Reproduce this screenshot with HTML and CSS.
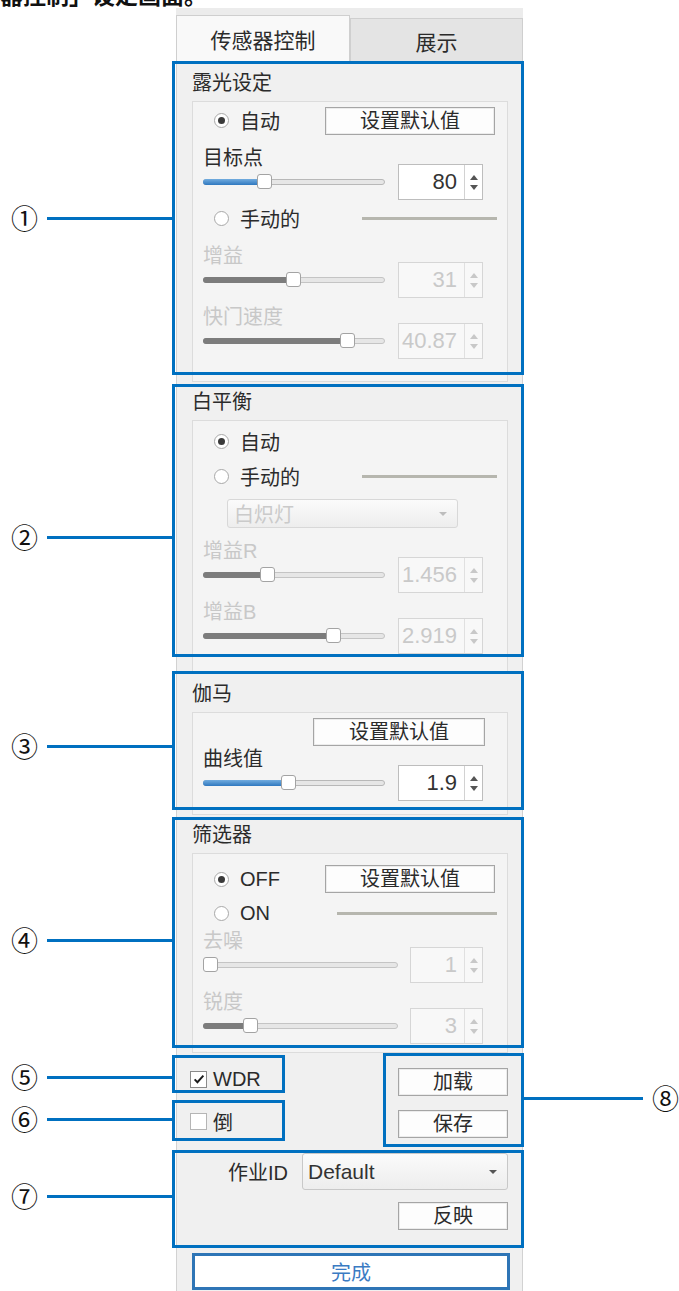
FILE: index.html
```html
<!DOCTYPE html>
<html>
<head>
<title>传感器控制</title>
<link rel="stylesheet" href="styles.css">
</head>
<body>

<div class="figure">
  <div class="caption">「传感器控制」设定画面。</div>

  <div class="panel">
    <div class="tabs">
      <div class="tab active">传感器控制</div>
      <div class="tab">展示</div>
    </div>

    <div class="page">
      <!-- exposure -->
      <section class="group g-exposure">
        <div class="group-title">露光设定</div>
        <div class="frame">
          <div class="opt-row first">
            <div class="opt"><span class="radio on"></span>自动</div>
            <button class="btn">设置默认值</button>
          </div>
          <div class="field target">
            <div class="field-main">
              <div class="field-label">目标点</div>
              <div class="track-row"><div class="slider active"><div class="fill" style="width:61px"></div><div class="knob" style="left:61px"></div></div></div>
            </div>
            <div class="spin"><span class="spin-val">80</span><span class="spin-btns"></span></div>
          </div>
          <div class="opt-row tall">
            <div class="opt"><span class="radio"></span>手动的</div>
            <div class="rule"></div>
          </div>
          <div class="field off gap8">
            <div class="field-main">
              <div class="field-label">增益</div>
              <div class="track-row"><div class="slider"><div class="fill" style="width:90px"></div><div class="knob" style="left:90px"></div></div></div>
            </div>
            <div class="spin"><span class="spin-val">31</span><span class="spin-btns"></span></div>
          </div>
          <div class="field off gap7">
            <div class="field-main">
              <div class="field-label">快门速度</div>
              <div class="track-row"><div class="slider"><div class="fill" style="width:144px"></div><div class="knob" style="left:144px"></div></div></div>
            </div>
            <div class="spin"><span class="spin-val">40.87</span><span class="spin-btns"></span></div>
          </div>
        </div>
      </section>

      <!-- white balance -->
      <section class="group g-balance">
        <div class="group-title">白平衡</div>
        <div class="frame">
          <div class="opt-row wb-first">
            <div class="opt"><span class="radio on"></span>自动</div>
          </div>
          <div class="opt-row">
            <div class="opt"><span class="radio"></span>手动的</div>
            <div class="rule"></div>
          </div>
          <div class="combo off">白炽灯<span class="caret"></span></div>
          <div class="field off gap11">
            <div class="field-main">
              <div class="field-label">增益R</div>
              <div class="track-row"><div class="slider"><div class="fill" style="width:64px"></div><div class="knob" style="left:64px"></div></div></div>
            </div>
            <div class="spin"><span class="spin-val">1.456</span><span class="spin-btns"></span></div>
          </div>
          <div class="field off gap7">
            <div class="field-main">
              <div class="field-label">增益B</div>
              <div class="track-row"><div class="slider"><div class="fill" style="width:130px"></div><div class="knob" style="left:130px"></div></div></div>
            </div>
            <div class="spin"><span class="spin-val">2.919</span><span class="spin-btns"></span></div>
          </div>
        </div>
      </section>

      <!-- gamma -->
      <section class="group g-gamma">
        <div class="group-title">伽马</div>
        <div class="frame">
          <div class="btn-row">
            <button class="btn wide">设置默认值</button>
          </div>
          <div class="field">
            <div class="field-main">
              <div class="field-label">曲线值</div>
              <div class="track-row"><div class="slider active"><div class="fill" style="width:85px"></div><div class="knob" style="left:85px"></div></div></div>
            </div>
            <div class="spin"><span class="spin-val">1.9</span><span class="spin-btns"></span></div>
          </div>
        </div>
      </section>

      <!-- filter -->
      <section class="group g-filter">
        <div class="group-title">筛选器</div>
        <div class="frame">
          <div class="opt-row filter-first">
            <div class="opt"><span class="radio on"></span>OFF</div>
            <button class="btn">设置默认值</button>
          </div>
          <div class="opt-row filter-on">
            <div class="opt"><span class="radio"></span>ON</div>
            <div class="rule long"></div>
          </div>
          <div class="field off long gapneg">
            <div class="field-main">
              <div class="field-label">去噪</div>
              <div class="track-row"><div class="slider"><div class="fill" style="width:7px"></div><div class="knob" style="left:7px"></div></div></div>
            </div>
            <div class="spin"><span class="spin-val">1</span><span class="spin-btns"></span></div>
          </div>
          <div class="field off long gap7">
            <div class="field-main">
              <div class="field-label">锐度</div>
              <div class="track-row"><div class="slider"><div class="fill" style="width:47px"></div><div class="knob" style="left:47px"></div></div></div>
            </div>
            <div class="spin"><span class="spin-val">3</span><span class="spin-btns"></span></div>
          </div>
        </div>
      </section>

      <div class="extras">
        <div class="checks">
          <div class="check-row">
            <span class="check on"><svg viewBox="0 0 16 16" width="14" height="14"><path d="M3 8.5l3.2 3.2L13 4.2" fill="none" stroke="#1a1a1a" stroke-width="2.2"/></svg></span>WDR
          </div>
          <div class="check-row">
            <span class="check"></span>倒
          </div>
        </div>
        <div class="file-btns">
          <button class="btn small">加载</button>
          <button class="btn small">保存</button>
        </div>
      </div>

      <div class="job-row">
        <span>作业ID</span>
        <div class="combo job">Default<span class="caret"></span></div>
      </div>
      <div class="apply-row">
        <button class="btn small">反映</button>
      </div>

      <button class="done">完成</button>
    </div>
  </div>

  <!-- annotation boxes -->
  <div class="mark m1"></div>
  <div class="mark m2"></div>
  <div class="mark m3"></div>
  <div class="mark m4"></div>
  <div class="mark m5"></div>
  <div class="mark m6"></div>
  <div class="mark m7"></div>
  <div class="mark m8"></div>

  <div class="callout c1"><span class="num">①</span><span class="lead"></span></div>
  <div class="callout c2"><span class="num">②</span><span class="lead"></span></div>
  <div class="callout c3"><span class="num">③</span><span class="lead"></span></div>
  <div class="callout c4"><span class="num">④</span><span class="lead"></span></div>
  <div class="callout c5"><span class="num">⑤</span><span class="lead"></span></div>
  <div class="callout c6"><span class="num">⑥</span><span class="lead"></span></div>
  <div class="callout c7"><span class="num">⑦</span><span class="lead"></span></div>
  <div class="callout c8"><span class="lead"></span><span class="num">⑧</span></div>
</div>

</body>
</html>
```

FILE: styles.css
```css
* { box-sizing: border-box; }
body { margin: 0; background: #fff; color: #2b2b2b; font-family: "Liberation Sans", "Noto Sans CJK SC", sans-serif; font-size: 20px; overflow: hidden; }
.figure { position: relative; width: 679px; height: 1291px; display: flow-root; }
.caption { margin-top: -16px; height: 24px; line-height: 24px; font-size: 23px; font-weight: bold; color: #111; white-space: nowrap; text-indent: -69px; }

/* panel */
.panel { margin-left: 176px; width: 347px; padding-top: 7px; background: #ececec; }
.tabs { display: flex; height: 47px; }
.tab { display: flex; align-items: center; justify-content: center; width: 173px; margin-top: 3px; border: 1px solid #cfcfcf; border-bottom: 0; background: #e4e4e4; font-size: 21px; }
.tab.active { width: 174px; margin-top: 0; background: #f9f9f9; }
.page { background: #f0f0f0; border: 1px solid #d2d2d2; border-top: 0; padding: 1px 14px 4px 15px; }

.group-title { height: 38px; line-height: 40px; }
.frame { display: flex; flex-direction: column; border: 1px solid #dcdcdc; background: #f4f4f4; }
.g-exposure .frame { height: 281px; }
.g-balance .frame { height: 254px; }
.g-gamma .frame { height: 103px; }
.g-filter .frame { height: 200px; }

/* option rows */
.opt-row { display: flex; align-items: center; justify-content: space-between; height: 35px; padding: 0 12px 0 21px; flex-shrink: 0; }
.opt-row.first { margin-top: 4px; height: 29px; }
.opt-row.tall { height: 36px; }
.opt-row.wb-first { margin-top: 3px; }
.opt-row.filter-first { margin-top: 11px; height: 28px; }
.opt-row.filter-on { margin-top: 3px; }
.opt { display: flex; align-items: center; gap: 11px; }
.radio { position: relative; width: 15px; height: 15px; border: 1px solid #a8a8a8; border-radius: 50%; background: #fff; }
.radio.on::after { content: ""; position: absolute; left: 3px; top: 3px; width: 7px; height: 7px; border-radius: 50%; background: #3a3a3a; }
.rule { width: 135px; height: 3px; margin-right: -2px; background: #b6b6ae; }
.rule.long { width: 160px; }

.btn { width: 170px; height: 28px; padding: 0; border: 1px solid #a5a5a5; background: #fdfdfd; box-shadow: inset 0 0 0 1px #ececec; color: #2b2b2b; font: inherit; line-height: 26px; }
.btn.wide { width: 172px; }
.btn.small { width: 110px; }
.btn-row { display: flex; justify-content: flex-end; height: 29px; margin-top: 5px; padding-right: 22px; flex-shrink: 0; }

/* slider + spinbox fields */
.field { display: flex; align-items: flex-end; gap: 13px; height: 54px; padding-left: 10px; flex-shrink: 0; }
.field.target { margin-top: 11px; }
.field.gap7 { margin-top: 7px; }
.field.gap8 { margin-top: 8px; }
.field.gap11 { margin-top: 11px; }
.field.gapneg { margin-top: -2px; }
.field-main { width: 182px; }
.field.long { gap: 12px; }
.field.long .field-main { width: 195px; }
.field-label { height: 18px; line-height: 24px; white-space: nowrap; }
.track-row { display: flex; align-items: center; height: 36px; }
.slider { position: relative; width: 100%; height: 6px; border: 1px solid #b8b8b8; border-radius: 3px; background: #e6e6e6; }
.fill { position: absolute; left: -1px; top: -1px; bottom: -1px; border-radius: 3px; background: #7c7c7c; }
.slider.active .fill { background: linear-gradient(#72acdf, #2f78bf); }
.knob { position: absolute; top: 50%; width: 15px; height: 15px; margin: -8px 0 0 -8px; border: 1px solid #a3a3a3; border-radius: 3px; background: #fff; }

.spin { display: flex; width: 85px; height: 36px; border: 1px solid #bdbdbd; background: #fff; }
.field.long .spin { width: 73px; }
.spin-val { flex: 1; padding-right: 7px; font-size: 22px; line-height: 34px; text-align: right; color: #333; overflow: hidden; }
.spin-btns { display: flex; flex-direction: column; align-items: center; justify-content: center; gap: 5px; width: 18px; border-left: 1px solid #d2d2d2; }
.spin-btns::before { content: ""; border: 4px solid transparent; border-top: 0; border-bottom: 5px solid #555; }
.spin-btns::after { content: ""; border: 4px solid transparent; border-bottom: 0; border-top: 5px solid #555; }

.field.off .field-label { color: #c8c8c8; }
.field.off .slider { border-color: #c4c4c4; }
.field.off .spin { border-color: #d6d6d6; background: #f8f8f8; }
.field.off .spin-val { color: #c9c9c9; }
.field.off .spin-btns { border-left-color: #e0e0e0; }
.field.off .spin-btns::before { border-bottom-color: #c8c8c8; }
.field.off .spin-btns::after { border-top-color: #c8c8c8; }

/* combo boxes */
.combo { display: flex; align-items: center; justify-content: space-between; width: 231px; height: 29px; margin: 5px 0 0 34px; padding: 0 10px 0 6px; border: 1px solid #c8c8c8; border-radius: 3px; background: linear-gradient(#fbfbfb, #ededed); flex-shrink: 0; }
.combo.off { border-color: #d8d8d8; color: #cacaca; }
.caret { border: 4px solid transparent; border-bottom: 0; border-top: 4px solid #555; }
.combo.off .caret { border-top-color: #bdbdbd; }
.combo.job { width: 206px; height: 37px; margin: 0; padding-left: 5px; font-size: 21px; color: #333; }

/* bottom area */
.extras { display: flex; justify-content: space-between; margin-top: 11px; }
.checks { display: flex; flex-direction: column; gap: 12px; margin-left: -2px; }
.check-row { display: flex; align-items: center; gap: 6px; height: 30px; }
.check { display: flex; align-items: center; justify-content: center; width: 17px; height: 17px; border: 1px solid #b5b5b5; background: #fff; }
.check.on { border-color: #8a8a8a; }
.file-btns { display: flex; flex-direction: column; gap: 14px; margin-top: 4px; }

.job-row { display: flex; align-items: center; justify-content: flex-end; gap: 14px; height: 37px; margin-top: 15px; }
.apply-row { display: flex; justify-content: flex-end; margin-top: 12px; }
.done { display: block; width: 318px; height: 37px; margin-top: 23px; padding: 0; border: 3px solid #2e75b6; background: #fff; color: #3b7bc3; font: inherit; }

/* annotations */
.mark { position: absolute; border: 3px solid #0070c0; }
.m1 { left: 172px; top: 61px; width: 352px; height: 314px; }
.m2 { left: 172px; top: 384px; width: 352px; height: 273px; }
.m3 { left: 172px; top: 671px; width: 352px; height: 139px; }
.m4 { left: 172px; top: 817px; width: 352px; height: 231px; }
.m5 { left: 172px; top: 1055px; width: 113px; height: 38px; }
.m6 { left: 172px; top: 1100px; width: 113px; height: 41px; }
.m7 { left: 172px; top: 1150px; width: 352px; height: 98px; }
.m8 { left: 383px; top: 1053px; width: 141px; height: 94px; }

.callout { position: absolute; left: 11px; display: flex; align-items: center; gap: 9px; width: 163px; height: 30px; }
.num { font-family: "Noto Sans CJK SC", "DejaVu Sans", sans-serif; font-size: 27px; line-height: 30px; color: #111; }
.lead { flex: 1; height: 3px; background: #0070c0; }
.c1 { top: 203px; }
.c2 { top: 522px; }
.c3 { top: 731px; }
.c4 { top: 925px; }
.c5 { top: 1062px; }
.c6 { top: 1104px; }
.c7 { top: 1181px; }
.c8 { left: 522px; width: 157px; top: 1083px; }
```
